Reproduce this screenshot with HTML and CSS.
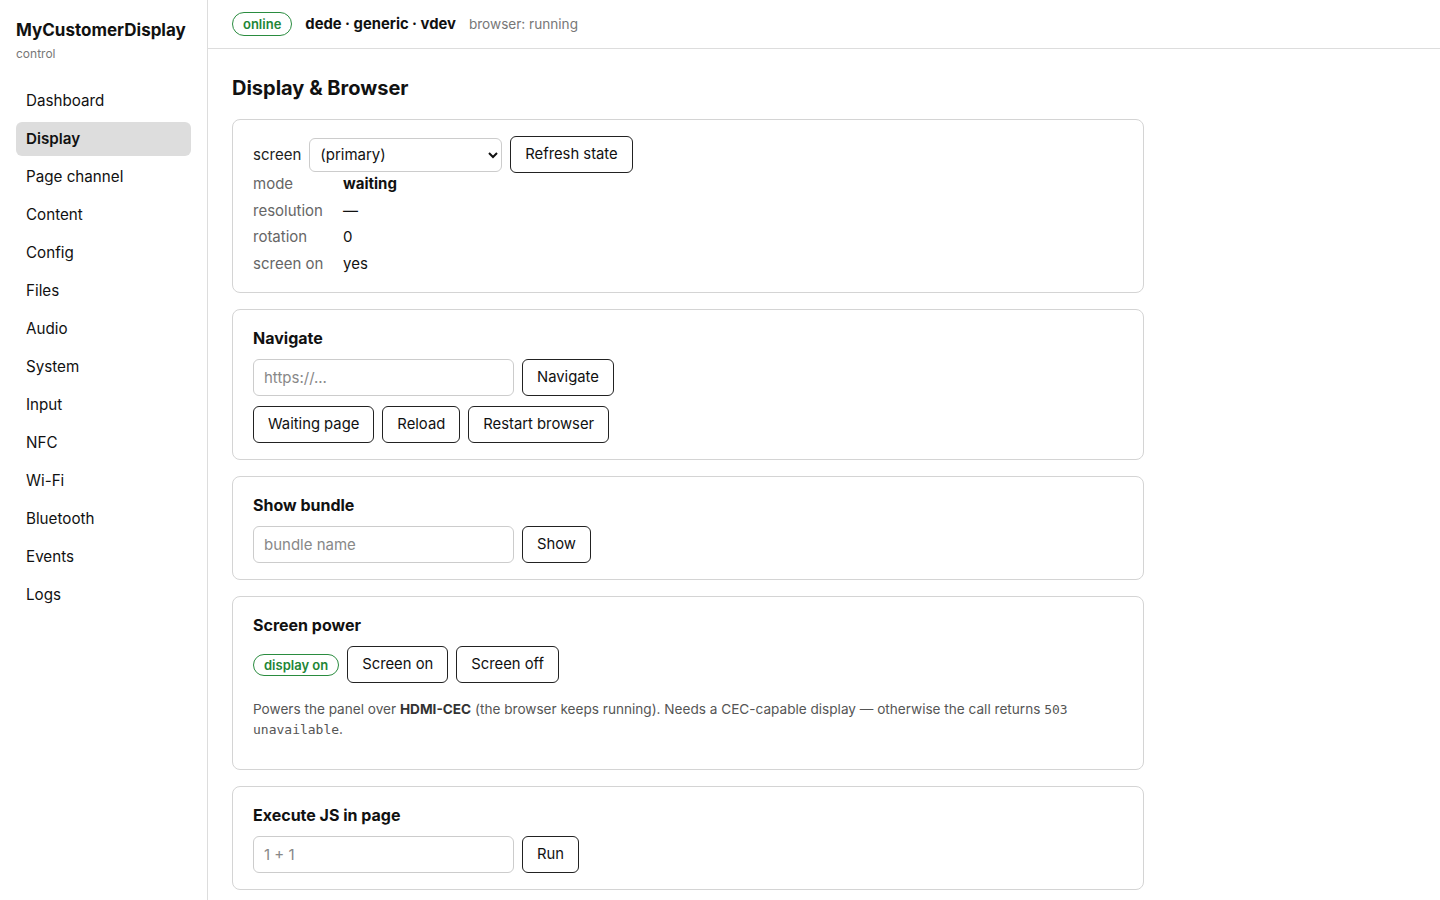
FILE: index.html
```html
<!DOCTYPE html>
<html lang="en">
<head>
    <meta charset="UTF-8">
    <meta name="viewport" content="width=device-width, initial-scale=1.0">
    <title>MyCustomerDisplay - Display</title>
    <link rel="stylesheet" href="styles.css">
</head>
<body>
    <div class="layout">
        <aside class="sidebar">
            <div class="brand">MyCustomerDisplay</div>
            <div class="brand-sub">control</div>
            <nav class="nav">
                <a href="#">Dashboard</a>
                <a href="#" class="active">Display</a>
                <a href="#">Page channel</a>
                <a href="#">Content</a>
                <a href="#">Config</a>
                <a href="#">Files</a>
                <a href="#">Audio</a>
                <a href="#">System</a>
                <a href="#">Input</a>
                <a href="#">NFC</a>
                <a href="#">Wi-Fi</a>
                <a href="#">Bluetooth</a>
                <a href="#">Events</a>
                <a href="#">Logs</a>
            </nav>
        </aside>

        <main class="main">
            <header class="topbar">
                <span class="pill">online</span>
                <span class="device">dede · generic · vdev</span>
                <span class="muted">browser: running</span>
            </header>

            <section class="content">
                <h1>Display &amp; Browser</h1>

                <div class="card">
                    <div class="row">
                        <label for="screen">screen</label>
                        <select id="screen">
                            <option>(primary)</option>
                        </select>
                        <button>Refresh state</button>
                    </div>
                    <div class="kv">
                        <span class="k">mode</span><span class="v"><b>waiting</b></span>
                        <span class="k">resolution</span><span class="v">—</span>
                        <span class="k">rotation</span><span class="v">0</span>
                        <span class="k">screen on</span><span class="v">yes</span>
                    </div>
                </div>

                <div class="card">
                    <h3>Navigate</h3>
                    <div class="row">
                        <input type="text" placeholder="https://...">
                        <button>Navigate</button>
                    </div>
                    <div class="row">
                        <button>Waiting page</button>
                        <button>Reload</button>
                        <button>Restart browser</button>
                    </div>
                </div>

                <div class="card">
                    <h3>Show bundle</h3>
                    <div class="row">
                        <input type="text" placeholder="bundle name">
                        <button>Show</button>
                    </div>
                </div>

                <div class="card">
                    <h3>Screen power</h3>
                    <div class="row">
                        <span class="pill pill-sm">display on</span>
                        <button>Screen on</button>
                        <button>Screen off</button>
                    </div>
                    <p class="hint">Powers the panel over <b>HDMI-CEC</b> (the browser keeps running). Needs a CEC-capable display — otherwise the call returns <code>503 unavailable</code>.</p>
                </div>

                <div class="card">
                    <h3>Execute JS in page</h3>
                    <div class="row">
                        <input type="text" placeholder="1 + 1">
                        <button>Run</button>
                    </div>
                </div>

                <div class="card">
                    <h3>Rotation</h3>
                    <div class="row">
                        <button>0°</button>
                        <button>90°</button>
                        <button>180°</button>
                        <button>270°</button>
                    </div>
                </div>

                <div class="card">
                    <h3>Screenshot</h3>
                    <div class="row">
                        <button>Take screenshot</button>
                    </div>
                    <p class="hint">Captures the current page as PNG.</p>
                </div>
            </section>
        </main>
    </div>
</body>
</html>
```

FILE: styles.css
```css
* {
    box-sizing: border-box;
}

body {
    margin: 0;
    font-family: Inter, "Noto Sans", sans-serif;
    font-size: 15px;
    color: #111;
    background: #fff;
}

.layout {
    display: flex;
    min-height: 100vh;
}

.sidebar {
    width: 208px;
    flex-shrink: 0;
    border-right: 1px solid #ddd;
    padding: 20px 16px;
}

.brand {
    font-size: 17px;
    font-weight: 700;
    line-height: 20px;
}

.brand-sub {
    font-size: 12px;
    color: #777;
    margin-top: 6px;
}

.nav {
    display: flex;
    flex-direction: column;
    gap: 4px;
    margin-top: 23px;
}

.nav a {
    display: block;
    padding: 7px 10px;
    line-height: 20px;
    font-size: 15.2px;
    color: #111;
    text-decoration: none;
    border-radius: 6px;
}

.nav a.active {
    background: #ddd;
    font-weight: 600;
}

.main {
    flex: 1;
    min-width: 0;
}

.topbar {
    height: 49px;
    border-bottom: 1px solid #ddd;
    display: flex;
    align-items: center;
    gap: 13px;
    padding: 0 24px;
}

.pill {
    display: inline-block;
    border: 1px solid #2a8c3f;
    color: #228536;
    border-radius: 999px;
    font-size: 13px;
    font-weight: 600;
    padding: 3px 10px;
    line-height: 16px;
}

.pill-sm {
    padding: 2px 10px;
}

.device {
    font-weight: 700;
    font-size: 14.8px;
}

.muted {
    color: #777;
    font-size: 13.6px;
}

.content {
    padding: 24px 24px 40px;
    max-width: 960px;
}

h1 {
    font-size: 20px;
    font-weight: 700;
    margin: 1px 0 17px;
    line-height: 28px;
}

.card {
    border: 1px solid #d4d4d4;
    border-radius: 8px;
    padding: 16px 20px;
    margin-bottom: 16px;
}

h3 {
    font-size: 16px;
    font-weight: 700;
    margin: 0 0 9px;
    line-height: 24px;
}

.row {
    display: flex;
    align-items: center;
    gap: 8px;
}

.row + .row {
    margin-top: 10px;
}

label {
    color: #222;
}

button {
    font-family: inherit;
    font-size: 14.8px;
    color: #111;
    background: #fff;
    border: 1px solid #222;
    border-radius: 6px;
    padding: 8px 14px;
    line-height: 19px;
    cursor: pointer;
}

input, select {
    font-family: inherit;
    font-size: 15px;
    border: 1px solid #ccc;
    border-radius: 6px;
    background: #fff;
    color: #111;
}

input {
    width: 261px;
    height: 37px;
    padding: 0 10px;
}

input::placeholder {
    color: #888;
}

select {
    width: 193px;
    height: 34px;
    padding: 0 6px;
}

.kv {
    display: grid;
    grid-template-columns: 90px auto;
    row-gap: 5px;
    padding-bottom: 2px;
    line-height: 21.5px;
}

.k {
    color: #666;
}

.hint {
    color: #555;
    font-size: 13.6px;
    line-height: 20px;
    margin: 16px 0 14px;
}

.hint b {
    color: #333;
}

code {
    font-family: "DejaVu Sans Mono", monospace;
    font-size: 13px;
    line-height: 1;
    color: #555;
}
```
